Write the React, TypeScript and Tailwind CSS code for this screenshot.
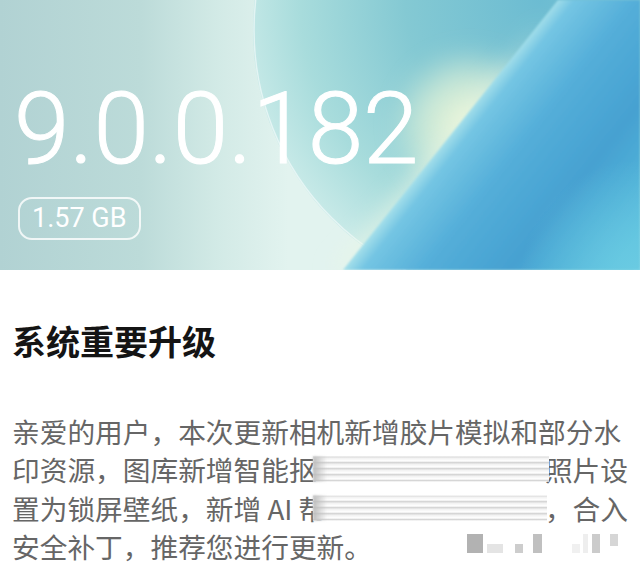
import type { ReactNode } from "react";

function HeaderArt() {
  return (
    <svg
      className="absolute inset-0"
      width="640"
      height="270"
      viewBox="0 0 640 270"
      aria-hidden="true"
    >
      <defs>
        <linearGradient id="base" x1="0" y1="0" x2="640" y2="0" gradientUnits="userSpaceOnUse">
          <stop offset="0" stopColor="#b1d2d3" />
          <stop offset="0.22" stopColor="#bcdbd9" />
          <stop offset="0.34" stopColor="#d2eae6" />
          <stop offset="0.45" stopColor="#e2f3ef" />
          <stop offset="1" stopColor="#e2f3ef" />
        </linearGradient>
        <radialGradient id="disc" cx="540" cy="0" r="300" gradientUnits="userSpaceOnUse">
          <stop offset="0" stopColor="#6cbcd2" />
          <stop offset="0.45" stopColor="#84c9d3" />
          <stop offset="0.8" stopColor="#a8dcdc" />
          <stop offset="1" stopColor="#c6e9e7" />
        </radialGradient>
        <radialGradient id="glow" cx="470" cy="125" r="80" gradientUnits="userSpaceOnUse">
          <stop offset="0" stopColor="#f1f8d8" stopOpacity="1" />
          <stop offset="0.55" stopColor="#e6f4d8" stopOpacity="0.7" />
          <stop offset="1" stopColor="#e6f4d8" stopOpacity="0" />
        </radialGradient>
        <linearGradient id="blue" x1="450" y1="135" x2="615" y2="265" gradientUnits="userSpaceOnUse">
          <stop offset="0" stopColor="#a4dfea" />
          <stop offset="0.07" stopColor="#74c5e3" />
          <stop offset="0.3" stopColor="#54aed9" />
          <stop offset="0.62" stopColor="#46a1d1" />
          <stop offset="1" stopColor="#58bcdd" />
        </linearGradient>
        <radialGradient id="cyan" cx="640" cy="280" r="120" gradientUnits="userSpaceOnUse">
          <stop offset="0" stopColor="#70d0e4" stopOpacity="0.8" />
          <stop offset="1" stopColor="#70d0e4" stopOpacity="0" />
        </radialGradient>
        <filter id="soft" x="-30%" y="-30%" width="160%" height="160%">
          <feGaussianBlur stdDeviation="10" />
        </filter>
        <filter id="edge" x="-5%" y="-5%" width="110%" height="110%">
          <feGaussianBlur stdDeviation="1.2" />
        </filter>
      </defs>
      <rect width="640" height="270" fill="url(#base)" />
      <circle cx="520" cy="30" r="267" fill="url(#disc)" />
      <circle cx="520" cy="30" r="266" fill="none" stroke="#ffffff" strokeOpacity="0.55" strokeWidth="1.5" />
      <ellipse cx="470" cy="125" rx="80" ry="80" fill="url(#glow)" filter="url(#soft)" />
      <polygon
        points="500,70 545,20 380,270 330,270"
        fill="#e9f6e6"
        fillOpacity="0.55"
        filter="url(#soft)"
      />
      <g filter="url(#edge)">
        <polygon points="558,0 640,0 640,270 343,270" fill="url(#blue)" />
      </g>
      <rect width="640" height="270" fill="url(#cyan)" />
    </svg>
  );
}

function Smudge({ className }: { className: string }) {
  return (
    <span className={`absolute top-1/2 h-[25px] -translate-y-1/2 bg-white ${className}`}>
      <span className="absolute inset-0 bg-[repeating-linear-gradient(to_bottom,#d6d6d6_0px,#f3f3f3_2px,#fdfdfd_4px,#e6e6e6_6px)] blur-[0.7px]" />
      <span className="absolute inset-y-0 left-0 w-[14px] bg-gradient-to-r from-[#bcbcbc] to-transparent blur-[1px]" />
    </span>
  );
}

function Block({ className }: { className: string }) {
  return <span className={`block ${className}`} />;
}

function Watermark() {
  return (
    <div className="mb-[6px] ml-[95px] flex h-[19px] items-end">
      <Block className="h-[19px] w-[16px] bg-[#b2b2b2]" />
      <Block className="ml-[4px] h-[9px] w-[16px] bg-[#e4e4e4]" />
      <Block className="ml-[12px] h-[9px] w-[8px] bg-[#cdcdcd]" />
      <Block className="ml-[10px] h-[19px] w-[9px] bg-[#c0c0c0]" />
      <Block className="ml-[30px] h-[9px] w-[8px] bg-[#f0f0f0]" />
      <Block className="ml-[3px] h-[19px] w-[5px] bg-[#eeeeee]" />
      <Block className="ml-[4px] h-[19px] w-[8px] bg-[#cbcbcb]" />
      <Block className="ml-[10px] h-[12px] w-[8px] self-start bg-[#d6d6d6]" />
    </div>
  );
}

function Line({ children }: { children: ReactNode }) {
  return <div className="relative flex items-center justify-between whitespace-nowrap">{children}</div>;
}

export default function App() {
  return (
    <div className="h-[570px] w-[640px] overflow-hidden bg-white">
      <header className="relative h-[270px] overflow-hidden">
        <HeaderArt />
        <div className="relative flex flex-col items-start pl-[14px] pt-[79px] font-['Roboto',sans-serif] text-white">
          <h1 className="text-[100px] font-light leading-[100px] [-webkit-text-stroke:1px_white]">9.0.0.182</h1>
          <span className="ml-1 mt-[18px] flex h-[43px] items-center rounded-[14px] border-2 border-white/80 px-[12px] text-[27px] font-normal leading-none">
            1.57 GB
          </span>
        </div>
      </header>

      <section className="px-[12px] pt-[54px] font-['Noto_Sans_CJK_SC',sans-serif]">
        <h2 className="text-[34px] font-bold leading-[34px] text-[#141414]">系统重要升级</h2>

        <div className="mt-[54px] text-[27.7px] leading-[38.3px] text-[#666666]">
          <Line>
            <span>亲爱的用户，本次更新相机新增胶片模拟和部分水</span>
          </Line>
          <Line>
            <span>印资源，图库新增智能抠</span>
            <span>照片设</span>
            <Smudge className="left-[301px] w-[236px]" />
          </Line>
          <Line>
            <span>置为锁屏壁纸，新增 AI 帮</span>
            <span>，合入</span>
            <Smudge className="left-[301px] w-[234px]" />
          </Line>
          <div className="flex items-center whitespace-nowrap">
            <span>安全补丁，推荐您进行更新。</span>
            <Watermark />
          </div>
        </div>
      </section>
    </div>
  );
}
